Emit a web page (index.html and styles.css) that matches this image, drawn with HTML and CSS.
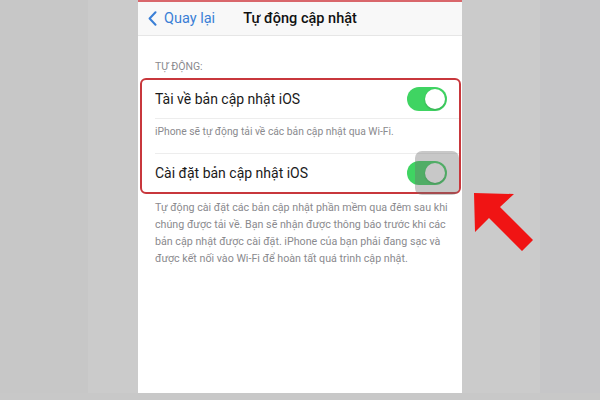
FILE: index.html
```html
<!DOCTYPE html>
<html lang="vi">
<head>
    <meta charset="UTF-8">
    <meta name="viewport" content="width=device-width, initial-scale=1.0">
    <title>Tự động cập nhật</title>
    <link rel="stylesheet" href="styles.css">
</head>
<body>
    <div class="stage">
        <div class="band band-outer"></div>
        <div class="band band-inner"></div>

        <div class="screen">
            <div class="navbar">
                <a class="back" href="#">
                    <svg width="9" height="15" viewBox="0 0 9 15"><path d="M7.5 1.2 L1.6 7.5 L7.5 13.8" fill="none" stroke="#3a7fd6" stroke-width="2" stroke-linecap="round" stroke-linejoin="round"/></svg>
                    Quay lại
                </a>
                <div class="title">Tự động cập nhật</div>
            </div>

            <div class="section-label">TỰ ĐỘNG:</div>

            <div class="group">
                <div class="row">
                    <span>Tài về bản cập nhật iOS</span>
                    <span class="toggle"></span>
                </div>
                <div class="note">iPhone sẽ tự động tải về các bản cập nhật qua Wi-Fi.</div>
                <div class="row">
                    <span>Cài đặt bản cập nhật iOS</span>
                    <span class="toggle"></span>
                    <span class="press"></span>
                </div>
            </div>

            <p class="footer">
                Tự động cài đặt các bản cập nhật phần mềm qua đêm sau khi<br>
                chúng được tải về. Bạn sẽ nhận được thông báo trước khi các<br>
                bản cập nhật được cài đặt. iPhone của bạn phải đang sạc và<br>
                được kết nối vào Wi-Fi để hoàn tất quá trình cập nhật.
            </p>
        </div>

        <div class="band band-inner"></div>
        <div class="band band-right"></div>
    </div>

    <!-- red pointer over the second switch -->
    <svg class="pointer" width="70" height="70" viewBox="470 188 70 70">
        <polygon points="474,193 514,194 500,207 533,240 522,251 489,218 475,232" fill="#f01414"/>
    </svg>
</body>
</html>
```

FILE: styles.css
```css
body {
    margin: 0;
    width: 600px;
    height: 400px;
    overflow: hidden;
    background-color: #c8c8c8;
    font-family: 'Roboto', 'Noto Sans', sans-serif;
    position: relative;
}

.stage {
    display: flex;
    height: 393px;
}

.band-outer {
    width: 88px;
    background-color: #c7c7c7;
}

.band-inner {
    width: 50px;
    background-color: #cbcbcb;
}

.band-inner:nth-of-type(4) {
    width: 78px;
}

.band-right {
    flex: 1;
    background-color: #c6c6c8;
}

.screen {
    width: 324px;
    background-color: #fff;
    border-top: 2px solid #d9666b;
    box-sizing: border-box;
}

.navbar {
    height: 33px;
    background-color: #f8f8f8;
    border-bottom: 1px solid #e6e6e6;
    display: flex;
    align-items: center;
    position: relative;
}

.back {
    display: flex;
    align-items: center;
    gap: 7px;
    padding-left: 10px;
    color: #3a7fd6;
    text-decoration: none;
    font-size: 14.5px;
}

.title {
    position: absolute;
    left: 0;
    right: 0;
    text-align: center;
    font-size: 14.5px;
    font-weight: 500;
    color: #111;
    pointer-events: none;
}

.section-label {
    margin: 24px 0 0 17px;
    font-size: 10.5px;
    line-height: 14px;
    color: #8a8a8e;
}

.group {
    margin: 4px 1px 0 2px;
    border: 2px solid #c8373c;
    border-radius: 6px;
}

.row {
    position: relative;
    height: 38px;
    display: flex;
    align-items: center;
    justify-content: space-between;
    padding: 0 12px 0 13px;
    font-size: 14px;
    color: #1a1a1a;
}

.toggle {
    position: relative;
    width: 40px;
    height: 24px;
    border-radius: 12px;
    background-color: #3fd462;
}

.toggle::after {
    content: "";
    position: absolute;
    right: 2px;
    top: 2px;
    width: 20px;
    height: 20px;
    border-radius: 50%;
    background-color: #fff;
    box-shadow: 0 1px 2px rgba(0, 0, 0, 0.2);
}

.press {
    position: absolute;
    right: 0;
    top: -3px;
    width: 44px;
    height: 44px;
    border-radius: 7px;
    background-color: rgba(110, 110, 110, 0.38);
}

.note {
    border-top: 1px solid #ededed;
    border-bottom: 1px solid #ededed;
    margin-left: 13px;
    height: 36px;
    padding-top: 6px;
    box-sizing: border-box;
    font-size: 10.3px;
    color: #8a8a8e;
}

.footer {
    margin: 5px 0 0 17px;
    font-size: 10.7px;
    line-height: 17px;
    color: #8a8a8e;
    white-space: nowrap;
}

.pointer {
    position: absolute;
    left: 470px;
    top: 188px;
}
```
